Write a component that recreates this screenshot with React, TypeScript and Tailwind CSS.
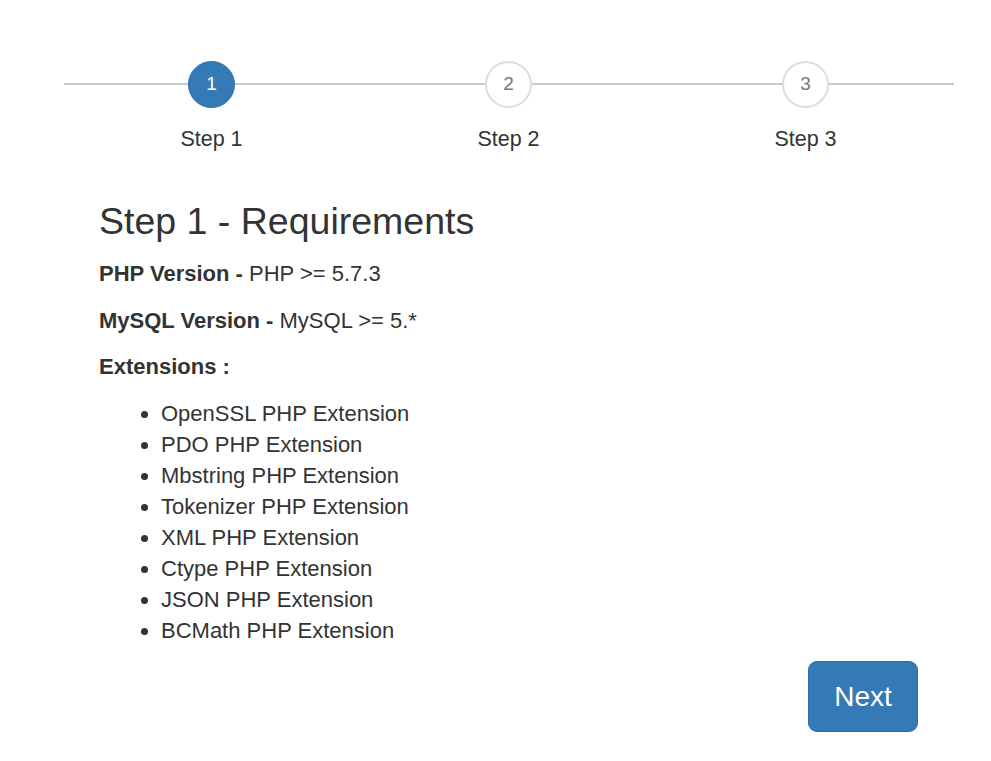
import { ReactNode } from 'react'

const steps = [
  { n: 1, label: 'Step 1', active: true },
  { n: 2, label: 'Step 2', active: false },
  { n: 3, label: 'Step 3', active: false },
]

const extensions = [
  'OpenSSL PHP Extension',
  'PDO PHP Extension',
  'Mbstring PHP Extension',
  'Tokenizer PHP Extension',
  'XML PHP Extension',
  'Ctype PHP Extension',
  'JSON PHP Extension',
  'BCMath PHP Extension',
]

function Requirement({ title, children }: { title: string; children?: ReactNode }) {
  return (
    <p className="mb-[15.6px] text-[22px] leading-[31px]">
      <b className="font-bold">{title}</b>
      {children}
    </p>
  )
}

export default function App() {
  return (
    <div className="min-h-screen bg-white font-['Liberation_Sans',Arial,sans-serif] text-[#333]">
      {/* Stepper */}
      <div className="pt-[61px] pl-[63px] w-[1019px]">
        <div className="relative grid grid-cols-3 w-[891px]">
          <div className="absolute left-[1px] right-0 top-[22px] h-[2px] bg-[#cccccc]" />
          {steps.map((s) => (
            <div key={s.n} className="relative flex flex-col items-center">
              <div
                className={
                  s.active
                    ? 'w-[47px] h-[47px] rounded-full bg-[#337ab7] border border-[#2e6da4] text-white flex items-center justify-center text-[19px]'
                    : 'w-[47px] h-[47px] rounded-full bg-white border-2 border-[#dddddd] text-[#777] flex items-center justify-center text-[19px]'
                }
              >
                {s.n}
              </div>
              <p className="mt-[16px] text-[21.5px] leading-[31px]">{s.label}</p>
            </div>
          ))}
        </div>
      </div>

      {/* Content */}
      <div className="pl-[99px] w-[918px]">
        <h3 className="mt-[46px] mb-[16px] text-[37.5px] leading-[41px] font-normal">
          Step 1 - Requirements
        </h3>
        <Requirement title="PHP Version - ">PHP &gt;= 5.7.3</Requirement>
        <Requirement title="MySQL Version - ">MySQL &gt;= 5.*</Requirement>
        <Requirement title="Extensions :" />
        <ul className="list-disc pl-[62px] text-[22px] leading-[31px] mb-[15.6px]">
          {extensions.map((e) => (
            <li key={e}>{e}</li>
          ))}
        </ul>
        <div className="flex justify-end">
          <button className="w-[110px] h-[71px] rounded-[9px] bg-[#337ab7] border border-[#2e6da4] text-white text-[28px]">
            Next
          </button>
        </div>
      </div>
    </div>
  )
}
